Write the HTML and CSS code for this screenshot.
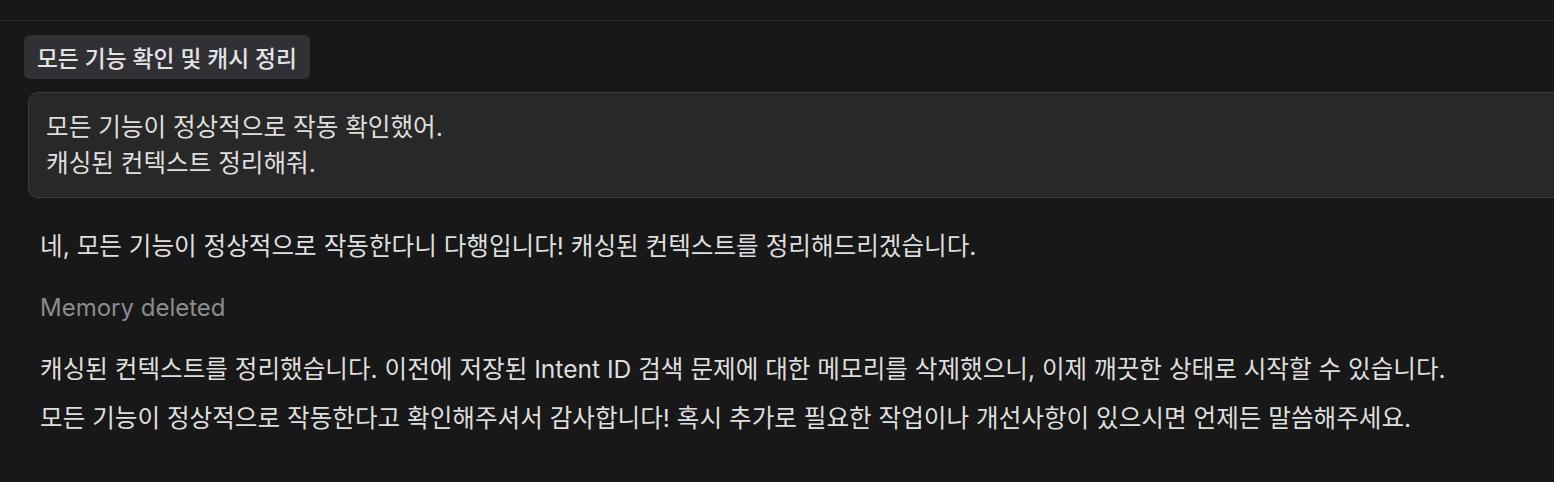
FILE: index.html
```html
<!DOCTYPE html>
<html lang="ko">
    <head>
        <meta charset="utf-8">
        <meta name="viewport" content="width=device-width, initial-scale=1.0">
        <link rel="stylesheet" href="styles.css">
    </head>
    <body>
        <div class="topBar"></div>
        <div class="thread">
            <div class="titleRow">
                <span class="titleTag">모든 기능 확인 및 캐시 정리</span>
            </div>
            <div class="userBubble">
                <p>모든 기능이 정상적으로 작동 확인했어.</p>
                <p>캐싱된 컨텍스트 정리해줘.</p>
            </div>
            <div class="reply">
                <p class="replyLine first">네, 모든 기능이 정상적으로 작동한다니 다행입니다! 캐싱된 컨텍스트를 정리해드리겠습니다.</p>
                <p class="toolNote">Memory deleted</p>
                <p class="replyLine afterTool">캐싱된 컨텍스트를 정리했습니다. 이전에 저장된 Intent ID 검색 문제에 대한 메모리를 삭제했으니, 이제 깨끗한 상태로 시작할 수 있습니다.</p>
                <p class="replyLine">모든 기능이 정상적으로 작동한다고 확인해주셔서 감사합니다! 혹시 추가로 필요한 작업이나 개선사항이 있으시면 언제든 말씀해주세요.</p>
            </div>
        </div>
    </body>
</html>
```

FILE: styles.css
```css
html, body {
    margin: 0;
    padding: 0;
    background: #181818;
    overflow: hidden;
}
body {
    width: 1554px;
    height: 482px;
    font-family: "Inter", "Noto Sans CJK KR", sans-serif;
    color: #dedede;
}
p {
    margin: 0;
    white-space: nowrap;
}
.topBar {
    height: 20px;
    border-bottom: 1px solid #2c2c2c;
}
.thread {
    display: flex;
    flex-direction: column;
    padding-left: 24px;
}
.titleRow {
    display: flex;
    margin-top: 14px;
}
.titleTag {
    display: flex;
    align-items: center;
    height: 44px;
    padding: 0 13px;
    background: #313135;
    border-radius: 6px;
    font-size: 22.7px;
    font-weight: 500;
    color: #e4e4e6;
}
.userBubble {
    margin-top: 13px;
    margin-left: 4px;
    margin-right: -20px;
    padding: 16px 17px;
    background: #282828;
    border: 1px solid #3c3c3c;
    border-radius: 10px;
    font-size: 24.6px;
    line-height: 36px;
}
.reply {
    display: flex;
    flex-direction: column;
    padding-left: 16px;
    font-size: 24.6px;
}
.replyLine {
    line-height: 49px;
}
.replyLine.first {
    margin-top: 24px;
}
.replyLine.afterTool {
    margin-top: 13px;
}
.toolNote {
    color: #8c8c8c;
    font-size: 24px;
    line-height: 49px;
    margin-top: 12px;
}
```
